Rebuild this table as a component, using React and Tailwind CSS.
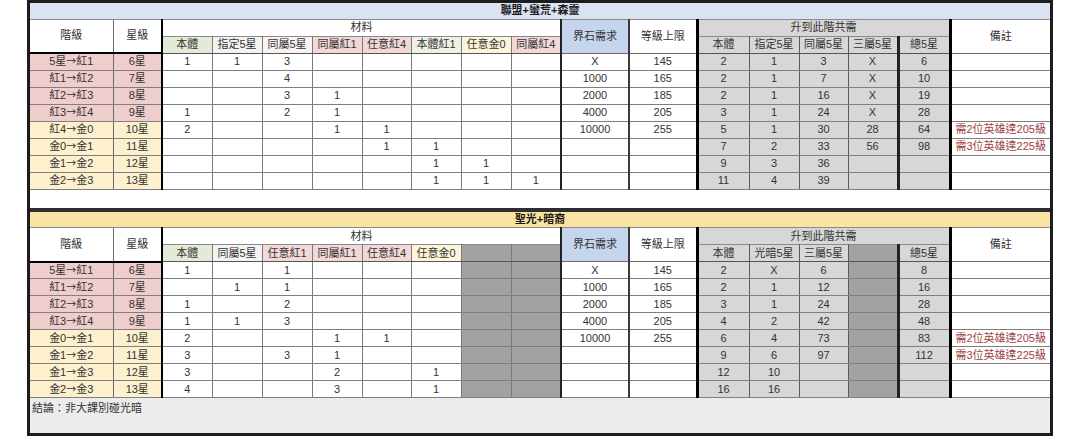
import React from "react";

// right border of each of the 18 columns
const RB = [
  "border-r border-r-[#6b6b6b]",
  "border-r-2 border-r-black",
  "border-r border-r-[#7a7a7a]",
  "border-r border-r-[#7a7a7a]",
  "border-r border-r-[#7a7a7a]",
  "border-r border-r-[#7a7a7a]",
  "border-r border-r-[#7a7a7a]",
  "border-r border-r-[#7a7a7a]",
  "border-r border-r-[#7a7a7a]",
  "border-r-2 border-r-[#222]",
  "border-r-2 border-r-[#3a3a3a]",
  "border-r-[3px] border-r-black",
  "border-r border-r-[#5a5a5a]",
  "border-r border-r-[#5a5a5a]",
  "border-r border-r-[#5a5a5a]",
  "border-r-[3px] border-r-[#222]",
  "border-r-[3px] border-r-black",
  "",
];

const WIDTHS = [
  "w-[83px]", "w-[49px]",
  "w-[50px]", "w-[50px]", "w-[50px]", "w-[50px]", "w-[49px]", "w-[50px]", "w-[50px]", "w-[50px]",
  "w-[68px]", "w-[68px]",
  "w-[52px]", "w-[50px]", "w-[49px]", "w-[50px]", "w-[52px]",
  "w-[100px]",
];

const PINK = "bg-[#efcdcd]";
const CREAM = "bg-[#fcf0cd]";
const GREEN = "bg-[#e2ebd5]";
const LPINK = "bg-[#f2d9d8]";
const GRAY = "bg-[#d7d7d7]";
const DARK = "bg-[#a2a2a2]";

const league = {
  title: "聯盟+蠻荒+森靈",
  titleBg: "bg-[#d9e3f1]",
  mats: [
    ["本體", GREEN],
    ["指定5星", "bg-[#f3f3f3]"],
    ["同屬5星", "bg-[#faf1f1]"],
    ["同屬紅1", LPINK],
    ["任意紅4", LPINK],
    ["本體紅1", "bg-[#eef2e4]"],
    ["任意金0", "bg-[#fdf4da]"],
    ["同屬紅4", LPINK],
  ],
  ups: ["本體", "指定5星", "同屬5星", "三屬5星", "總5星"],
  darkMat: [],
  darkUp: [],
  rows: [
    ["5星|紅1", "6星", "1", "1", "3", "", "", "", "", "", "X", "145", "2", "1", "3", "X", "6", ""],
    ["紅1|紅2", "7星", "", "", "4", "", "", "", "", "", "1000", "165", "2", "1", "7", "X", "10", ""],
    ["紅2|紅3", "8星", "", "", "3", "1", "", "", "", "", "2000", "185", "2", "1", "16", "X", "19", ""],
    ["紅3|紅4", "9星", "1", "", "2", "1", "", "", "", "", "4000", "205", "3", "1", "24", "X", "28", ""],
    ["紅4|金0", "10星", "2", "", "", "1", "1", "", "", "", "10000", "255", "5", "1", "30", "28", "64", "需2位英雄達205級"],
    ["金0|金1", "11星", "", "", "", "", "1", "1", "", "", "", "", "7", "2", "33", "56", "98", "需3位英雄達225級"],
    ["金1|金2", "12星", "", "", "", "", "", "1", "1", "", "", "", "9", "3", "36", "", "", ""],
    ["金2|金3", "13星", "", "", "", "", "", "1", "1", "1", "", "", "11", "4", "39", "", "", ""],
  ],
};

const holy = {
  title: "聖光+暗裔",
  titleBg: "bg-[#fae4a3]",
  mats: [
    ["本體", GREEN],
    ["同屬5星", "bg-[#f3f3f3]"],
    ["任意紅1", LPINK],
    ["同屬紅1", LPINK],
    ["任意紅4", LPINK],
    ["任意金0", "bg-[#fdf4da]"],
    ["", DARK],
    ["", DARK],
  ],
  ups: ["本體", "光暗5星", "三屬5星", "", "總5星"],
  darkMat: [8, 9],
  darkUp: [15],
  rows: [
    ["5星|紅1", "6星", "1", "", "1", "", "", "", "", "", "X", "145", "2", "X", "6", "", "8", ""],
    ["紅1|紅2", "7星", "", "1", "1", "", "", "", "", "", "1000", "165", "2", "1", "12", "", "16", ""],
    ["紅2|紅3", "8星", "1", "", "2", "", "", "", "", "", "2000", "185", "3", "1", "24", "", "28", ""],
    ["紅3|紅4", "9星", "1", "1", "3", "", "", "", "", "", "4000", "205", "4", "2", "42", "", "48", ""],
    ["金0|金1", "10星", "2", "", "", "1", "1", "", "", "", "10000", "255", "6", "4", "73", "", "83", "需2位英雄達205級"],
    ["金1|金2", "11星", "3", "", "3", "1", "", "", "", "", "", "", "9", "6", "97", "", "112", "需3位英雄達225級"],
    ["金1|金3", "12星", "3", "", "", "2", "", "1", "", "", "", "", "12", "10", "", "", "", ""],
    ["金2|金3", "13星", "4", "", "", "3", "", "1", "", "", "", "", "16", "16", "", "", "", ""],
  ],
};

function cellBg(t, r, c) {
  if (c < 2) return r < 4 ? PINK : CREAM;
  if (t.darkMat.includes(c) || t.darkUp.includes(c)) return DARK;
  if (c >= 12 && c <= 16) return GRAY;
  return "bg-white";
}

// "5星|紅1" -> 5星→紅1 with a full-width CJK arrow
function Step({ text }) {
  const [a, b] = text.split("|");
  return (
    <>
      {a}
      <span className="font-['Noto_Sans_CJK_TC',sans-serif] text-[10px]">→</span>
      {b}
    </>
  );
}

function Sheet({ t }) {
  return (
    <table className="table-fixed border-collapse w-[1020px]">
      <colgroup>
        {WIDTHS.map((w, i) => (
          <col key={i} className={w} />
        ))}
      </colgroup>
      <tbody>
        <tr className="h-[16px]">
          <td
            colSpan={18}
            className={`${t.titleBg} border-b border-b-[#8a8a8a] p-0 text-center font-bold text-[11px] leading-none text-[#1a1a1a]`}
          >
            {t.title}
          </td>
        </tr>
        <tr className="h-[17px]">
          <td rowSpan={2} className={`${RB[0]} border-b-2 border-b-black bg-white p-0 text-center`}>
            階級
          </td>
          <td rowSpan={2} className={`${RB[1]} border-b-2 border-b-black bg-white p-0 text-center`}>
            星級
          </td>
          <td colSpan={8} className={`${RB[9]} bg-white p-0 text-center`}>
            材料
          </td>
          <td rowSpan={2} className={`${RB[10]} border-b border-b-[#6a6a6a] bg-[#c6d5ee] p-0 text-center`}>
            界石需求
          </td>
          <td rowSpan={2} className={`${RB[11]} border-b border-b-[#6a6a6a] bg-white p-0 text-center`}>
            等級上限
          </td>
          <td colSpan={5} className={`${RB[16]} ${GRAY} p-0 text-center`}>
            升到此階共需
          </td>
          <td rowSpan={2} className="border-b border-b-[#6a6a6a] bg-white p-0 text-center">
            備註
          </td>
        </tr>
        <tr className="h-[17px]">
          {t.mats.map(([label, bg], i) => (
            <td
              key={i}
              className={`${RB[i + 2]} border-t border-t-[#8a8a8a] border-b border-b-[#555] ${bg} p-0 text-center`}
            >
              {label}
            </td>
          ))}
          {t.ups.map((label, i) => (
            <td
              key={i}
              className={`${RB[i + 12]} border-t border-t-[#8a8a8a] border-b border-b-[#555] ${
                t.darkUp.includes(i + 12) ? DARK : GRAY
              } p-0 text-center`}
            >
              {label}
            </td>
          ))}
        </tr>
        {t.rows.map((row, r) => (
          <tr key={r} className="h-[17px]">
            {row.map((v, c) => (
              <td
                key={c}
                className={`${RB[c]} border-b border-b-[#7f7f7f] ${cellBg(t, r, c)} p-0 ${
                  c === 17 ? "text-left pl-[4px] text-[#9e3f3f]" : "text-center"
                }`}
              >
                {c === 0 ? <Step text={v} /> : v}
              </td>
            ))}
          </tr>
        ))}
      </tbody>
    </table>
  );
}

export default function App() {
  return (
    <div className="w-[1080px] h-[443px] bg-white text-[11px] leading-none text-[#333] font-['Liberation_Sans','Noto_Sans_CJK_TC',sans-serif]">
      <div className="ml-[27px] w-[1026px] border-x-[3px] border-t-[3px] border-b-[3px] border-[#1c1c1c]">
        <Sheet t={league} />
        <div className="h-[18px] bg-white" />
        <div className="h-[4px] bg-[#2e2e2e]" />
        <Sheet t={holy} />
        <div className="h-[35px] bg-[#ececec] pl-[2px] pt-[5px]">結論：非大課別碰光暗</div>
      </div>
    </div>
  );
}
